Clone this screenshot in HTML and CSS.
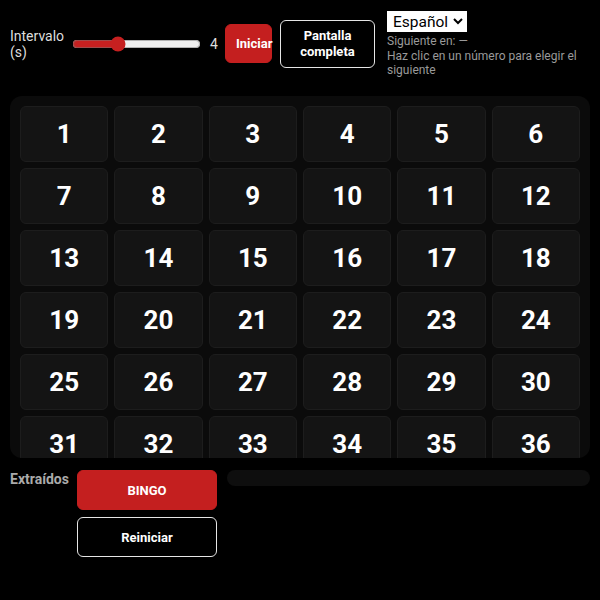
FILE: index.html
```html
<!DOCTYPE html>
<html lang="es">
<head>
<meta charset="utf-8">
<title>Bingo</title>
<link rel="stylesheet" href="styles.css">
</head>
<body>
<div class="app">
  <div class="controls">
    <label class="label" for="iv">Intervalo<br>(s)</label>
    <input id="iv" class="slider" type="range" min="1" max="10" value="4">
    <span class="val">4</span>
    <button class="btn btn-red btn-start">Iniciar</button>
    <button class="btn btn-outline btn-full">Pantalla<br>completa</button>
    <div class="side">
      <select class="lang"><option>Español</option></select>
      <div class="hint">Siguiente en: —</div>
      <div class="hint">Haz clic en un número para elegir el siguiente</div>
    </div>
  </div>
  <div class="board">
    <div class="grid">
      <div class="cell">1</div><div class="cell">2</div><div class="cell">3</div><div class="cell">4</div><div class="cell">5</div><div class="cell">6</div>
      <div class="cell">7</div><div class="cell">8</div><div class="cell">9</div><div class="cell">10</div><div class="cell">11</div><div class="cell">12</div>
      <div class="cell">13</div><div class="cell">14</div><div class="cell">15</div><div class="cell">16</div><div class="cell">17</div><div class="cell">18</div>
      <div class="cell">19</div><div class="cell">20</div><div class="cell">21</div><div class="cell">22</div><div class="cell">23</div><div class="cell">24</div>
      <div class="cell">25</div><div class="cell">26</div><div class="cell">27</div><div class="cell">28</div><div class="cell">29</div><div class="cell">30</div>
      <div class="cell">31</div><div class="cell">32</div><div class="cell">33</div><div class="cell">34</div><div class="cell">35</div><div class="cell">36</div>
    </div>
  </div>
  <div class="drawn">
    <div class="drawn-label">Extraídos</div>
    <div class="actions">
      <button class="btn btn-red btn-wide">BINGO</button>
      <button class="btn btn-outline btn-wide">Reiniciar</button>
    </div>
    <div class="strip"></div>
  </div>
</div>
</body>
</html>
```
FILE: styles.css
```css
html, body {
  margin: 0;
  background: #000;
  color: #eee;
  font-family: Roboto, "Liberation Sans", sans-serif;
}
.app {
  padding: 11px 10px 10px 10px;
}
.controls {
  display: flex;
  align-items: center;
  height: 65px;
}
.label {
  font-size: 14px;
  line-height: 16px;
  color: #ddd;
  width: 60px;
}
.slider {
  width: 129px;
  margin: 0 0 0 2px;
  accent-color: #c62020;
}
.val {
  font-size: 14px;
  color: #ddd;
  margin-left: 9px;
  width: 7px;
}
.btn {
  font-family: Roboto, "Liberation Sans", sans-serif;
  font-weight: 700;
  font-size: 13px;
  color: #fff;
  border-radius: 6px;
  cursor: pointer;
}
.btn-red {
  background: #c41f1f;
  border: 1px solid #c41f1f;
}
.btn-outline {
  background: #000;
  border: 1px solid #e6e6e6;
}
.btn-start {
  width: 47px;
  height: 39px;
  margin-left: 8px;
  padding: 0 0 0 10px;
  text-align: left;
  white-space: nowrap;
  overflow: visible;
}
.btn-full {
  width: 95px;
  height: 48px;
  margin-left: 8px;
  line-height: 16px;
  padding: 0;
}
.side {
  margin-left: 12px;
  flex: 1;
  align-self: flex-start;
}
.lang {
  font-family: Roboto, "Liberation Sans", sans-serif;
  font-size: 15.5px;
  height: 21px;
  padding: 0 1px;
  background: #fff;
  color: #000;
  border: 1px solid #fff;
  border-radius: 0;
  margin-bottom: 2px;
}
.hint {
  font-size: 12px;
  line-height: 14.5px;
  color: #9a9a9a;
}
.board {
  margin-top: 20px;
  height: 362px;
  overflow: hidden;
  background: #0b0b0b;
  border-radius: 12px;
  box-sizing: border-box;
  padding: 10px;
}
.grid {
  display: grid;
  grid-template-columns: repeat(6, 1fr);
  grid-auto-rows: 56px;
  gap: 6px;
}
.cell {
  background: #141414;
  border: 1px solid #1d1d1d;
  border-radius: 6px;
  display: flex;
  align-items: center;
  justify-content: center;
  font-size: 26px;
  font-weight: 700;
  color: #fff;
}
.drawn {
  display: flex;
  align-items: flex-start;
  margin-top: 12px;
}
.drawn-label {
  font-size: 14px;
  font-weight: 700;
  color: #aaa;
  line-height: 16px;
  margin-top: 1px;
  width: 67px;
}
.actions {
  display: flex;
  flex-direction: column;
  gap: 7px;
}
.btn-wide {
  width: 140px;
  height: 40px;
}
.strip {
  flex: 1;
  height: 16px;
  margin-left: 10px;
  background: #0e0e0e;
  border-radius: 8px;
}
```
